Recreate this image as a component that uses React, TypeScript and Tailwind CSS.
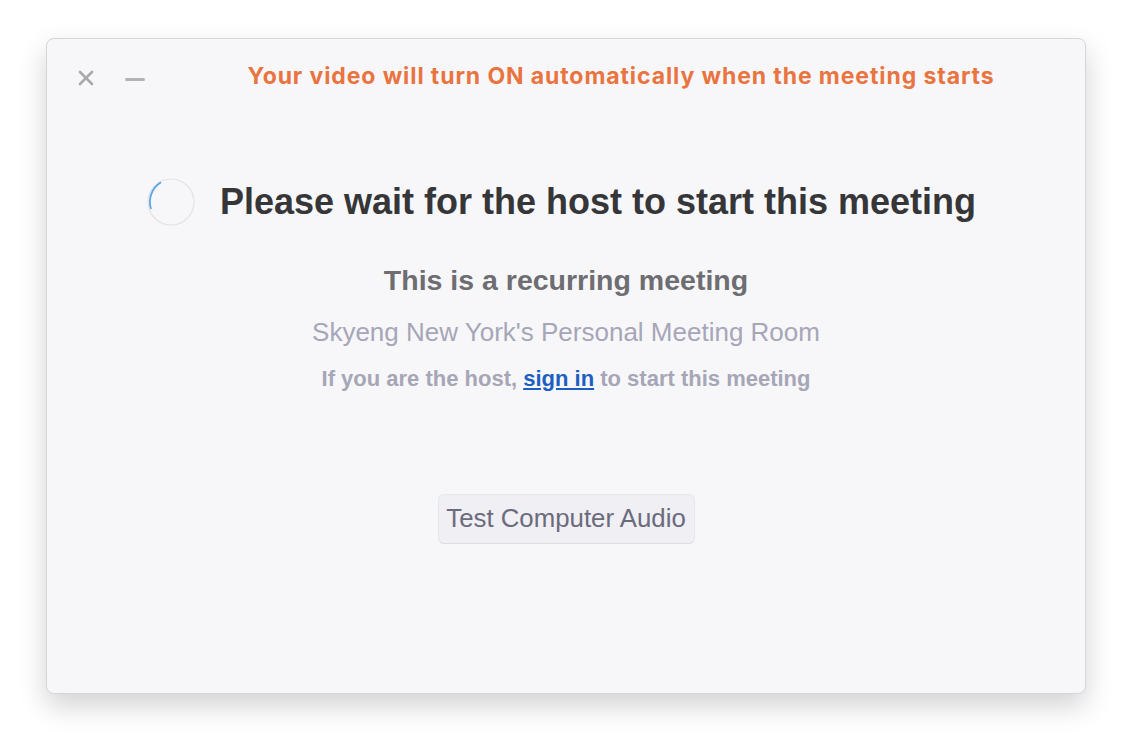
import React from "react";

export default function App() {
  return (
    <div
      className="w-[1132px] h-[748px] bg-white pt-[38px] pl-[46px]"
      style={{ fontFamily: '"Liberation Sans", Arial, sans-serif' }}
    >
      <div className="w-[1040px] h-[656px] bg-[#f7f7f9] rounded-[8px] border border-[#d6d6da] shadow-[0_12px_28px_rgba(0,0,0,0.18)] flex flex-col">
        {/* title bar */}
        <div className="relative h-[74px] shrink-0 flex items-center">
          <div className="absolute left-[30px] top-[30px] flex items-center gap-[30px]">
            <svg width="18" height="18" viewBox="0 0 18 18">
              <path d="M3 3 L15 15 M15 3 L3 15" stroke="#a9a9ad" strokeWidth="2.6" strokeLinecap="round" />
            </svg>
            <div className="w-[20px] h-[3px] rounded-full bg-[#b3b3b7] mt-[2px]" />
          </div>
          <div
            className="w-full pl-[150px] pr-[40px] text-center text-[23px] tracking-[0.9px] font-bold text-[#e9743f] leading-none"
            style={{ fontFamily: 'Inter, "Liberation Sans", sans-serif' }}
          >
            Your video will turn ON automatically when the meeting starts
          </div>
        </div>
        {/* heading */}
        <div className="mt-[65px] flex items-center justify-center gap-[25px] pr-[9px]">
          <svg width="48" height="48" viewBox="0 0 48 48">
            <circle cx="24" cy="24" r="23" fill="none" stroke="#e3e3e7" strokeWidth="1.2" />
            <path d="M4 31 A23 23 0 0 1 14 4.3" fill="none" stroke="#5aa6e6" strokeWidth="1.8" />
          </svg>
          <div className="text-[36px] font-bold text-[#363638] leading-none">
            Please wait for the host to start this meeting
          </div>
        </div>
        <div className="mt-[40px] text-center text-[28.5px] font-bold text-[#6d6d72] leading-none">
          This is a recurring meeting
        </div>
        <div className="mt-[24px] text-center text-[26px] text-[#a6a6b8] leading-none">
          Skyeng New York's Personal Meeting Room
        </div>
        <div className="mt-[23px] text-center text-[22px] font-bold text-[#a6a6b6] leading-none">
          If you are the host,{" "}
          <span className="text-[#1c5fc0] underline underline-offset-2">sign in</span> to start this meeting
        </div>
        <div className="mt-[104px] flex justify-center">
          <button className="w-[257px] h-[50px] rounded-[6px] bg-[#efeff4] border border-[#e6e6ec] border-b-[#dcdce3] text-[25.8px] text-[#6b6b7d] leading-none">
            Test Computer Audio
          </button>
        </div>
      </div>
    </div>
  );
}
